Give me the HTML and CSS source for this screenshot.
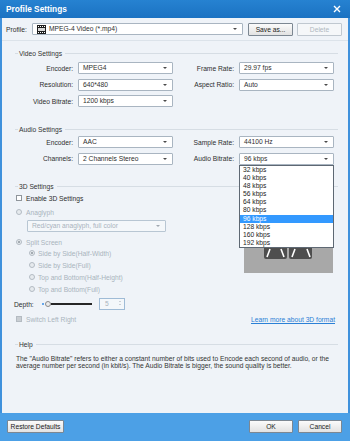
FILE: index.html
```html
<!DOCTYPE html>
<html lang="en">
<head>
    <meta charset="UTF-8">
    <meta name="viewport" content="width=device-width, initial-scale=1.0">
    <title>Profile Settings</title>
    <link rel="stylesheet" href="styles.css">
</head>
<body>

<div class="window">
    <div class="titlebar">
        <span class="title">Profile Settings</span>
        <svg class="close" width="8" height="8" viewBox="0 0 8 8"><path d="M1 1L7 7M7 1L1 7" stroke="#fff" stroke-width="1.4"/></svg>
    </div>

    <div class="main">
        <div class="profile-row">
            <span class="profile-label">Profile:</span>
            <div class="select profile-select">
                <svg class="film" width="9" height="9" viewBox="0 0 9 9">
                    <rect width="9" height="9" fill="#1e1e1e"/>
                    <rect x="1" y="1" width="1" height="1" fill="#fff"/>
                    <rect x="3" y="1" width="1" height="1" fill="#fff"/>
                    <rect x="5" y="1" width="1" height="1" fill="#fff"/>
                    <rect x="7" y="1" width="1" height="1" fill="#fff"/>
                    <rect x="1" y="3" width="7" height="3" fill="#d8d8d8"/>
                    <rect x="1" y="7" width="1" height="1" fill="#fff"/>
                    <rect x="3" y="7" width="1" height="1" fill="#fff"/>
                    <rect x="5" y="7" width="1" height="1" fill="#fff"/>
                    <rect x="7" y="7" width="1" height="1" fill="#fff"/>
                </svg>
                MPEG-4 Video (*.mp4)
            </div>
            <button type="button" class="btn save-btn">Save as...</button>
            <button type="button" class="btn delete-btn" disabled>Delete</button>
        </div>

        <div class="group-title video-title">Video Settings</div>
        <div class="form-grid video-grid">
            <label>Encoder:</label><div class="select">MPEG4</div>
            <label>Frame Rate:</label><div class="select">29.97 fps</div>
            <label>Resolution:</label><div class="select">640*480</div>
            <label>Aspect Ratio:</label><div class="select">Auto</div>
            <label>Video Bitrate:</label><div class="select">1200 kbps</div>
        </div>

        <div class="group-title audio-title">Audio Settings</div>
        <div class="form-grid audio-grid">
            <label>Encoder:</label><div class="select">AAC</div>
            <label>Sample Rate:</label><div class="select">44100 Hz</div>
            <label>Channels:</label><div class="select">2 Channels Stereo</div>
            <label>Audio Bitrate:</label>
            <div class="select open">96 kbps
                <div class="dropdown">
                    <div>32 kbps</div>
                    <div>40 kbps</div>
                    <div>48 kbps</div>
                    <div>56 kbps</div>
                    <div>64 kbps</div>
                    <div>80 kbps</div>
                    <div class="sel">96 kbps</div>
                    <div>128 kbps</div>
                    <div>160 kbps</div>
                    <div>192 kbps</div>
                </div>
            </div>
        </div>

        <div class="group-title three-title">3D Settings</div>
        <div class="three-body">
            <div class="three-left">
                <div class="opt enable-row"><span class="checkbox"></span>Enable 3D Settings</div>
                <div class="opt off anaglyph-row"><span class="radio"></span>Anaglyph</div>
                <div class="select disabled anaglyph-select">Red/cyan anaglyph, full color</div>
                <div class="opt off split-row"><span class="radio on"></span>Split Screen</div>
                <div class="opt off sub first"><span class="radio on"></span>Side by Side(Half-Width)</div>
                <div class="opt off sub"><span class="radio"></span>Side by Side(Full)</div>
                <div class="opt off sub"><span class="radio"></span>Top and Bottom(Half-Height)</div>
                <div class="opt off sub"><span class="radio"></span>Top and Bottom(Full)</div>
                <div class="depth-row">
                    <span class="depth-label">Depth:</span>
                    <div class="slider"><span class="tick"></span><span class="thumb"></span><span class="track"></span></div>
                    <div class="spin">5<span class="spin-arrows"><i class="up"></i><i class="down"></i></span></div>
                </div>
                <div class="opt off switch-row"><span class="checkbox grey"></span>Switch Left Right</div>
            </div>
            <div class="three-right">
                <svg class="preview" width="89" height="70" viewBox="0 0 89 70">
                    <rect width="89" height="70" fill="#a8a8a8"/>
                    <rect x="20" y="18" width="23" height="38" rx="2" fill="#4e4e4e"/>
                    <rect x="45" y="18" width="23" height="38" rx="2" fill="#4e4e4e"/>
                    <path d="M23 54L26 46M37 46L40 54M48 54L51 46M63 46L66 54" stroke="#fff" stroke-width="1.6"/>
                </svg>
                <a class="learn" href="#">Learn more about 3D format</a>
            </div>
        </div>

        <div class="group-title help-title">Help</div>
        <p class="help-text">The "Audio Bitrate" refers to either a constant number of bits used to Encode each second of audio, or the<br>average number per second (in kbit/s). The Audio Bitrate is bigger, the sound quality is better.</p>
    </div>

    <div class="footer">
        <button type="button" class="btn restore-btn">Restore Defaults</button>
        <div class="footer-right">
            <button type="button" class="btn ok-btn">OK</button>
            <button type="button" class="btn cancel-btn">Cancel</button>
        </div>
    </div>
</div>

</body>
</html>
```

FILE: styles.css
```css
* {
    box-sizing: border-box;
}
body {
    margin: 0;
    font-family: "Liberation Sans", Arial, sans-serif;
    font-size: 6.7px;
    color: #2e2e2e;
    background: #fff;
}
.window {
    width: 350px;
    height: 441px;
    display: flex;
    flex-direction: column;
    overflow: hidden;
}

/* title bar */
.titlebar {
    height: 18px;
    flex: none;
    background: linear-gradient(#2682d1, #1b72c2);
    display: flex;
    align-items: center;
    justify-content: space-between;
    padding: 0 9px 0 6px;
}
.title {
    color: #fff;
    font-weight: bold;
    font-size: 8.3px;
}

.main {
    flex: 1;
    background: #eff3f8;
    border-left: 2px solid #3f91dc;
    border-right: 2px solid #3f91dc;
}

/* profile row */
.profile-row {
    height: 23px;
    display: flex;
    align-items: center;
    padding-left: 4px;
    border-bottom: 1px solid #dce3ea;
}
.profile-label {
    width: 26px;
}
.profile-select {
    width: 211px;
    display: flex;
    align-items: center;
    gap: 3px;
}
.film {
    flex: none;
}
.save-btn {
    margin-left: 5px;
    width: 45px;
}
.delete-btn {
    margin-left: 4px;
    width: 45px;
}

/* buttons */
.btn {
    font-family: inherit;
    font-size: 6.7px;
    color: #222;
    height: 13px;
    padding: 0;
    border: 1px solid #7c8792;
    border-radius: 1px;
    background: linear-gradient(#fbfbfb, #e2e2e2);
}
.btn:disabled {
    color: #b0b7bf;
    border-color: #c0c8d0;
    background: #f5f7f9;
}

/* selects */
.select {
    position: relative;
    height: 12px;
    line-height: 10px;
    padding-left: 4px;
    background: #fff;
    border: 1px solid #a9b5c1;
    border-radius: 1px;
    white-space: nowrap;
}
.select::after {
    content: "";
    position: absolute;
    right: 5px;
    top: 4px;
    border-left: 2px solid transparent;
    border-right: 2px solid transparent;
    border-top: 2px solid #4a4a4a;
}
.select.disabled {
    color: #a9b3bd;
    background: #f4f7fa;
    border-color: #b8c6d3;
}
.select.disabled::after {
    border-top-color: #a0a8b0;
}

.dropdown {
    position: absolute;
    left: -1px;
    top: 11px;
    width: 95px;
    background: #fff;
    border: 1px solid #5e6873;
    z-index: 5;
    line-height: 8.2px;
    color: #222;
}
.dropdown div {
    height: 8.2px;
    padding-left: 3px;
}
.dropdown .sel {
    background: #3399ff;
    color: #fff;
}

/* group headers */
.group-title {
    display: flex;
    align-items: center;
    height: 9px;
    margin: 0 10px 0 13px;
    color: #333;
}
.group-title::before {
    content: "";
    width: 3px;
    height: 1px;
    margin-right: 1px;
    background: #d6dde4;
}
.group-title::after {
    content: "";
    flex: 1;
    height: 1px;
    margin-left: 3px;
    background: #d6dde4;
}
.video-title {
    margin-top: 7.5px;
}
.audio-title {
    margin-top: 17.5px;
}
.three-title {
    margin-top: 17px;
}
.help-title {
    margin-top: 15.5px;
}

/* two column forms */
.form-grid {
    display: grid;
    grid-template-columns: 65px 95px 56px 95px;
    column-gap: 5px;
    row-gap: 4.5px;
    padding-left: 6px;
}
.form-grid label {
    text-align: right;
    align-self: center;
    white-space: nowrap;
}
.video-grid {
    margin-top: 4.5px;
}
.audio-grid {
    margin-top: 2.5px;
}

/* 3D settings */
.three-body {
    display: flex;
}
.three-left {
    flex: 1;
}
.three-right {
    width: 91px;
    margin-right: 13px;
    display: flex;
    flex-direction: column;
    align-items: flex-end;
}
.preview {
    display: block;
    margin-top: 12.5px;
    align-self: flex-start;
}
.learn {
    margin-top: 43px;
    height: 8px;
    line-height: 8px;
    color: #2b80d6;
    white-space: nowrap;
}

.opt {
    height: 8px;
    display: flex;
    align-items: center;
    gap: 4px;
    padding-left: 14px;
}
.opt.off {
    color: #a9b3bd;
}
.enable-row {
    margin-top: 3.5px;
}
.anaglyph-row,
.split-row {
    margin-top: 6px;
}
.anaglyph-select {
    width: 139px;
    margin: 4px 0 0 25px;
}
.sub {
    padding-left: 27px;
    margin-top: 4px;
    gap: 3px;
}
.sub.first {
    margin-top: 3px;
}
.switch-row {
    margin-top: 5px;
}

.checkbox {
    width: 6px;
    height: 6px;
    background: #fff;
    border: 1px solid #8f959b;
}
.checkbox.grey {
    background: #c9ced3;
    border-color: #b4bbc2;
}
.radio {
    position: relative;
    width: 6px;
    height: 6px;
    border-radius: 50%;
    background: #e6eaee;
    border: 1.5px solid #b3bbc3;
}
.radio.on::after {
    content: "";
    position: absolute;
    left: 0.5px;
    top: 0.5px;
    width: 2px;
    height: 2px;
    border-radius: 50%;
    background: #8c949c;
}

.depth-row {
    height: 12px;
    margin-top: 5px;
    padding-left: 12px;
    display: flex;
    align-items: center;
}
.depth-label {
    width: 28px;
}
.slider {
    width: 50px;
    height: 8px;
    display: flex;
    align-items: center;
}
.tick {
    width: 2px;
    height: 2px;
    border-radius: 50%;
    background: #3a8ee6;
    margin-right: 1px;
}
.thumb {
    width: 6px;
    height: 6px;
    border-radius: 50%;
    background: #ececec;
    border: 1px solid #8a8a8a;
}
.track {
    flex: 1;
    height: 1.5px;
    background: #262626;
}
.spin {
    position: relative;
    width: 26px;
    height: 12px;
    margin-left: 7px;
    padding-left: 5px;
    line-height: 10px;
    color: #a9b3bd;
    background: #f4f7fa;
    border: 1px solid #9fbbd6;
}
.spin-arrows {
    position: absolute;
    right: 3px;
    top: 2px;
    display: flex;
    flex-direction: column;
    gap: 2px;
}
.spin-arrows i {
    border-left: 1.5px solid transparent;
    border-right: 1.5px solid transparent;
}
.spin-arrows .up {
    border-bottom: 1.5px solid #a0a8b0;
}
.spin-arrows .down {
    border-top: 1.5px solid #a0a8b0;
}

/* help */
.help-text {
    margin: 6px 0 0;
    padding-left: 14px;
    line-height: 7px;
    color: #333;
    white-space: nowrap;
}

/* footer */
.footer {
    height: 28px;
    flex: none;
    background: #4ca0e6;
    display: flex;
    align-items: flex-start;
    padding: 7px 8px 0 7px;
}
.footer .btn {
    height: 12.5px;
}
.restore-btn {
    width: 57px;
}
.footer-right {
    margin-left: auto;
    display: flex;
    gap: 5px;
}
.ok-btn,
.cancel-btn {
    width: 44px;
}
```
